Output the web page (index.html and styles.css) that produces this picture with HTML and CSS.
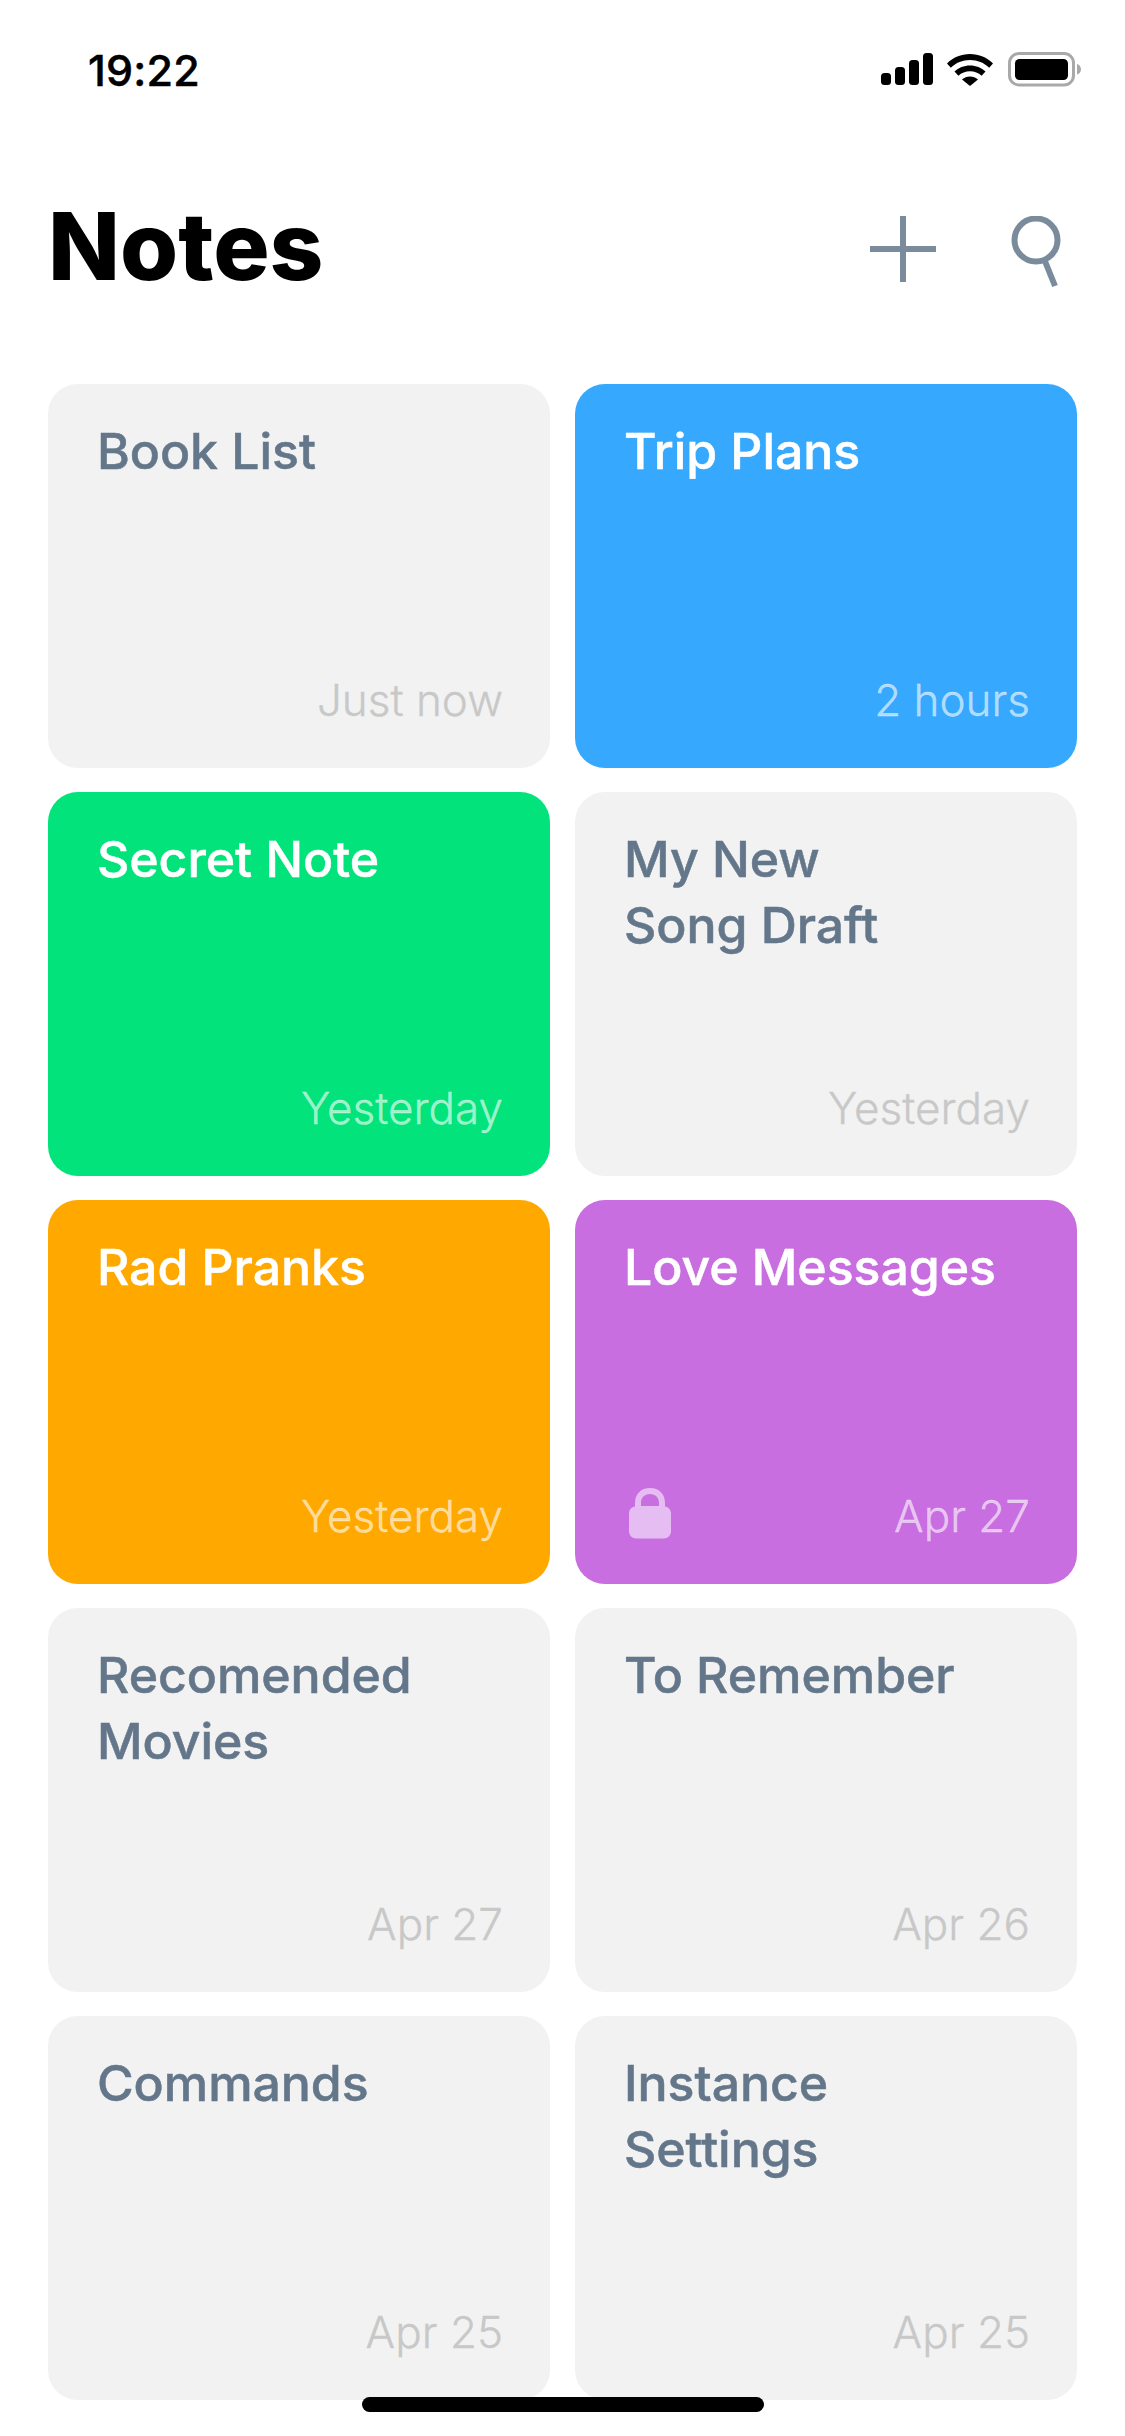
FILE: index.html
```html
<!DOCTYPE html>
<html lang="en">
<head>
<meta charset="utf-8">
<title>Notes</title>
<link rel="stylesheet" href="styles.css">
</head>
<body>
<div class="screen">
  <div class="status">
    <span class="time">19:22</span>
    <svg class="status-icons" width="200" height="36" viewBox="0 0 200 36">
      <rect x="0" y="21" width="10" height="12" rx="3.5"/>
      <rect x="14" y="15" width="10" height="18" rx="3.5"/>
      <rect x="28" y="8" width="10" height="25" rx="3.5"/>
      <rect x="42" y="1" width="10" height="32" rx="3.5"/>
      <path d="M66 11.5C72 5.5 80 2 89 2s17 3.5 23 9.500l-3.800 4.200C103 10.800 96.500 8 89 8s-14 2.800-19.200 7.700z"/>
      <path d="M73.500 19.500C77.500 15.800 83 13.500 89 13.500s11.500 2.300 15.500 6l-3.900 4.200C97.500 21 93.500 19.300 89 19.300s-8.500 1.700-11.600 4.400z"/>
      <path d="M81 27.500c2.200-2 5-3 8-3s5.800 1 8 3L89 34z"/>
      <rect class="batt-frame" x="128.500" y="1.500" width="64" height="31.500" rx="9.500"/>
      <rect x="134" y="7" width="53" height="21" rx="4.500"/>
      <path class="batt-nub" d="M196 12c2.500.5 4 2.800 4 5.300s-1.500 4.800-4 5.300z"/>
    </svg>
  </div>
  <header class="head">
    <h1 class="title">Notes</h1>
    <div class="actions">
      <svg class="act" width="66" height="66" viewBox="0 0 66 66"><path d="M33 0v66M0 33h66"/></svg>
      <svg class="act" width="50" height="72" viewBox="0 0 50 72"><circle cx="25" cy="24" r="21.500"/><path d="M33.500 44l10.500 26"/></svg>
    </div>
  </header>
  <main class="grid">
    <article class="card"><h2 class="name">Book List</h2><div class="foot"><time class="date">Just now</time></div></article>
    <article class="card blue"><h2 class="name">Trip Plans</h2><div class="foot"><time class="date">2 hours</time></div></article>
    <article class="card green"><h2 class="name">Secret Note</h2><div class="foot"><time class="date">Yesterday</time></div></article>
    <article class="card"><h2 class="name">My New<br>Song Draft</h2><div class="foot"><time class="date">Yesterday</time></div></article>
    <article class="card orange"><h2 class="name">Rad Pranks</h2><div class="foot"><time class="date">Yesterday</time></div></article>
    <article class="card purple"><h2 class="name">Love Messages</h2><div class="foot">
      <svg class="lock" width="42" height="51" viewBox="0 0 42 51"><path fill-rule="evenodd" d="M6 18.500V15C6 6 12 0 21 0s15 6 15 15v3.500c3.500.6 6 3.300 6 7V43c0 4.500-3 7.500-7.500 7.500h-27C3 50.500 0 47.500 0 43V25.500c0-3.700 2.500-6.400 6-7zM12 18h18v-3c0-5.500-3.500-9-9-9s-9 3.500-9 9z"/></svg>
      <time class="date">Apr 27</time></div></article>
    <article class="card"><h2 class="name">Recomended<br>Movies</h2><div class="foot"><time class="date">Apr 27</time></div></article>
    <article class="card"><h2 class="name">To Remember</h2><div class="foot"><time class="date">Apr 26</time></div></article>
    <article class="card"><h2 class="name">Commands</h2><div class="foot"><time class="date">Apr 25</time></div></article>
    <article class="card"><h2 class="name">Instance<br>Settings</h2><div class="foot"><time class="date">Apr 25</time></div></article>
  </main>
  <div class="home-bar"></div>
</div>
</body>
</html>
```

FILE: styles.css
```css
* { box-sizing: border-box; }
html, body { margin: 0; padding: 0; background: #fff; }
body { font-family: Inter, "Liberation Sans", sans-serif; }
.screen { position: relative; width: 1125px; height: 2436px; overflow: hidden; background: #fff; }
.status { height: 136px; padding: 51px 44px 0 88px; display: flex; justify-content: space-between; align-items: flex-start; }
.time { font-size: 43px; font-weight: 500; line-height: 38px; color: #000; letter-spacing: .2px; -webkit-text-stroke: .5px #000; }
.status-icons { fill: #000; margin-top: 1px; }
.batt-frame { fill: none; stroke: #a9a9a9; stroke-width: 3; }
.batt-nub { fill: #a9a9a9; }
.head { height: 248px; padding: 80px 64px 0 48px; display: flex; justify-content: space-between; align-items: flex-start; }
.title { margin: -30px 0 0; font-size: 94px; font-weight: 800; line-height: 120px; letter-spacing: 0; color: #000; }
.actions { display: flex; align-items: flex-start; gap: 75px; }
.act { fill: none; stroke: #7a8c9c; stroke-width: 6; }
.grid { padding: 0 48px; display: grid; grid-template-columns: 502px 502px; grid-auto-rows: 384px; gap: 24px 25px; }
.card { display: flex; flex-direction: column; justify-content: space-between; padding: 34px 47px 41px 49px; border-radius: 30px; background: #f2f2f2; color: #64778a; }
.name { margin: 0; font-size: 50px; font-weight: 500; line-height: 66px; letter-spacing: -.05px; -webkit-text-stroke: .5px currentColor; }
.foot { display: flex; align-items: flex-end; justify-content: flex-end; }
.date { font-size: 44px; font-weight: 300; line-height: 54px; color: #c8c8c8; -webkit-text-stroke: .3px currentColor; }
.card.blue, .card.green, .card.orange, .card.purple { color: #fff; }
.card.blue .date, .card.green .date, .card.orange .date, .card.purple .date { color: rgba(255,255,255,.6); }
.blue { background: #36a9ff; }
.green { background: #03e37c; }
.orange { background: #ffa800; }
.purple { background: #c86ee0; }
.purple .foot { justify-content: space-between; }
.lock { fill: #e6bdf2; margin: 0 0 4px 5px; }
.home-bar { position: absolute; left: 362px; top: 2397px; width: 402px; height: 15px; border-radius: 8px; background: #000; }
```
